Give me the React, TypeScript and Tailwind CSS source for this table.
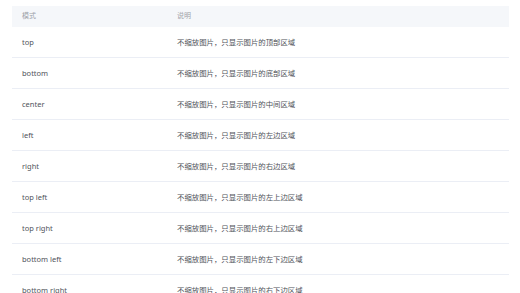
const rows: [string, string][] = [
  ["top", "不缩放图片，只显示图片的顶部区域"],
  ["bottom", "不缩放图片，只显示图片的底部区域"],
  ["center", "不缩放图片，只显示图片的中间区域"],
  ["left", "不缩放图片，只显示图片的左边区域"],
  ["right", "不缩放图片，只显示图片的右边区域"],
  ["top left", "不缩放图片，只显示图片的左上边区域"],
  ["top right", "不缩放图片，只显示图片的右上边区域"],
  ["bottom left", "不缩放图片，只显示图片的左下边区域"],
  ["bottom right", "不缩放图片，只显示图片的右下边区域"],
]

export default function App() {
  return (
    <div className="w-[520px] h-[293px] overflow-hidden bg-white pt-[6px] px-[12px] font-['Noto_Sans','Noto_Sans_CJK_SC',sans-serif] text-[7.5px]">
      <div className="w-[497px]">
        <div className="flex h-[21px] items-center bg-[#f5f7fa] text-[#a0a3a9]">
          <div className="w-[155px] pl-[10px] text-[7px]">模式</div>
          <div className="pl-[10px] text-[7px]">说明</div>
        </div>
        {rows.map(([mode, desc]) => (
          <div key={mode} className="flex h-[31px] items-center pt-[1px] border-b border-[#ebeef5] text-[#50535a]">
            <div className="w-[155px] pl-[10px]">{mode}</div>
            <div className="pl-[10px] text-[7.4px]">{desc}</div>
          </div>
        ))}
      </div>
    </div>
  )
}
